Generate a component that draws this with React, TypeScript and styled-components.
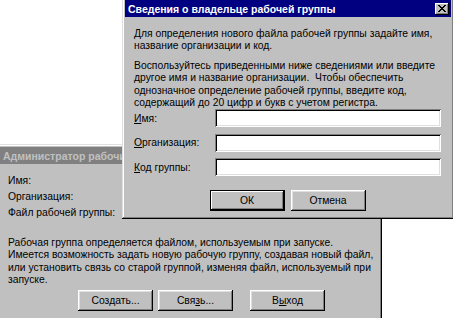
import React from "react";
import styled, { createGlobalStyle } from "styled-components";

const Global = createGlobalStyle`
  html, body {
    margin: 0;
    padding: 0;
    background: #fff;
  }
  body {
    font-family: "Liberation Sans", Arial, sans-serif;
    font-size: 10.35px;
    color: #000;
  }
`;

const Desktop = styled.div`
  position: relative;
  width: 453px;
  height: 318px;
  overflow: hidden;
  background: #fff;
`;

const Window = styled.div<{ $x: number; $y: number; $w: number; $h: number }>`
  position: absolute;
  left: ${(p) => p.$x}px;
  top: ${(p) => p.$y}px;
  width: ${(p) => p.$w}px;
  height: ${(p) => p.$h}px;
  box-sizing: border-box;
  padding: 3px;
  background: #c0c0c0;
  box-shadow: inset -1px -1px #000, inset 1px 1px #dfdfdf, inset -2px -2px #808080,
    inset 2px 2px #fff;
  display: flex;
  flex-direction: column;
`;

const TitleBar = styled.div<{ $active?: boolean }>`
  height: 17px;
  flex: none;
  display: flex;
  align-items: center;
  justify-content: space-between;
  padding: 0 2px 0 3px;
  background: ${(p) => (p.$active ? "#000080" : "#808080")};
  color: ${(p) => (p.$active ? "#fff" : "#c0c0c0")};
  font-size: 10.5px;
  font-weight: bold;
  white-space: nowrap;
  overflow: hidden;
`;

const CloseBox = styled.div`
  width: 14px;
  height: 12px;
  box-sizing: border-box;
  background: #c0c0c0;
  box-shadow: inset -1px -1px #000, inset 1px 1px #fff, inset -2px -2px #808080;
  display: flex;
  align-items: center;
  justify-content: center;
`;

const Body = styled.div<{ $pad: string }>`
  padding: ${(p) => p.$pad};
  display: flex;
  flex-direction: column;
  white-space: nowrap;
`;

const Para = styled.p<{ $mb?: number }>`
  margin: 0 0 ${(p) => p.$mb ?? 0}px;
  line-height: 12.4px;
`;

const Form = styled.div`
  display: grid;
  grid-template-columns: 81px 1fr;
  row-gap: 6.5px;
  align-items: center;
  margin-top: 0;
`;

const Label = styled.label`
  line-height: 13px;
`;

const Field = styled.div`
  height: 18px;
  box-sizing: border-box;
  background: #fff;
  box-shadow: inset 1px 1px #808080, inset -1px -1px #fff, inset 2px 2px #000,
    inset -2px -2px #dfdfdf;
`;

const Buttons = styled.div<{ $gap: number; $mt: number; $shift?: number }>`
  display: flex;
  justify-content: center;
  gap: ${(p) => p.$gap}px;
  margin-top: ${(p) => p.$mt}px;
  padding-left: ${(p) => p.$shift ?? 0}px;
`;

const Button = styled.div<{ $default?: boolean; $apart?: boolean }>`
  width: 75px;
  height: 21px;
  box-sizing: border-box;
  margin-left: ${(p) => (p.$apart ? 12 : 0)}px;
  display: flex;
  align-items: center;
  justify-content: center;
  background: #c0c0c0;
  box-shadow: ${(p) =>
    p.$default
      ? "inset -1px -1px #000, inset 1px 1px #000, inset -2px -2px #000, inset 2px 2px #fff, inset -3px -3px #808080"
      : "inset -1px -1px #000, inset 1px 1px #fff, inset -2px -2px #808080, inset 2px 2px #dfdfdf"};
`;

const U = styled.span`
  text-decoration: underline;
  text-underline-offset: 1px;
`;

const InfoList = styled.div`
  display: flex;
  flex-direction: column;
  gap: 3px;
  line-height: 13px;
`;

const X = () => (
  <svg width="8" height="7" viewBox="0 0 8 7">
    <path
      d="M0 0h2v1h1v1h2V1h1V0h2v1H7v1H6v1H5v1h1v1h1v1h1v1H6V6H5V5H3v1H2v1H0V6h1V5h1V4h1V3H2V2H1V1H0z"
      fill="#000"
    />
  </svg>
);

export default function App() {
  return (
    <>
      <Global />
      <Desktop>
        <Window $x={-3} $y={144} $w={385} $h={180}>
          <TitleBar>Администратор рабочих групп</TitleBar>
          <Body $pad="10px 8px 0 8px">
            <InfoList>
              <span>Имя:</span>
              <span>Организация:</span>
              <span>Файл рабочей группы:</span>
            </InfoList>
            <Para style={{ marginTop: 18 }}>
              Рабочая группа определяется файлом, используемым при запуске.
              <br />
              Имеется возможность задать новую рабочую группу, создавая новый файл,
              <br />
              или установить связь со старой группой, изменяя файл, используемый при
              <br />
              запуске.
            </Para>
            <Buttons $gap={5} $mt={3} $shift={24}>
              <Button>
                Соз<U>д</U>ать...
              </Button>
              <Button>
                Свя<U>з</U>ь...
              </Button>
              <Button $apart>
                В<U>ы</U>ход
              </Button>
            </Buttons>
          </Body>
        </Window>

        <Window $x={122} $y={-3} $w={332} $h={222}>
          <TitleBar $active>
            <span>Сведения о владельце рабочей группы</span>
            <CloseBox>
              <X />
            </CloseBox>
          </TitleBar>
          <Body $pad="11px 10px 0 9px">
            <Para $mb={7}>
              Для определения нового файла рабочей группы задайте имя,
              <br />
              название организации и код.
            </Para>
            <Para>
              Воспользуйтесь приведенными ниже сведениями или введите
              <br />
              другое имя и название организации.&nbsp; Чтобы обеспечить
              <br />
              однозначное определение рабочей группы, введите код,
              <br />
              содержащий до 20 цифр и букв с учетом регистра.
            </Para>
            <Form>
              <Label>
                <U>И</U>мя:
              </Label>
              <Field />
              <Label>
                <U>О</U>рганизация:
              </Label>
              <Field />
              <Label>
                <U>К</U>од группы:
              </Label>
              <Field />
            </Form>
            <Buttons $gap={6} $mt={14}>
              <Button $default>ОК</Button>
              <Button>Отмена</Button>
            </Buttons>
          </Body>
        </Window>
      </Desktop>
    </>
  );
}
